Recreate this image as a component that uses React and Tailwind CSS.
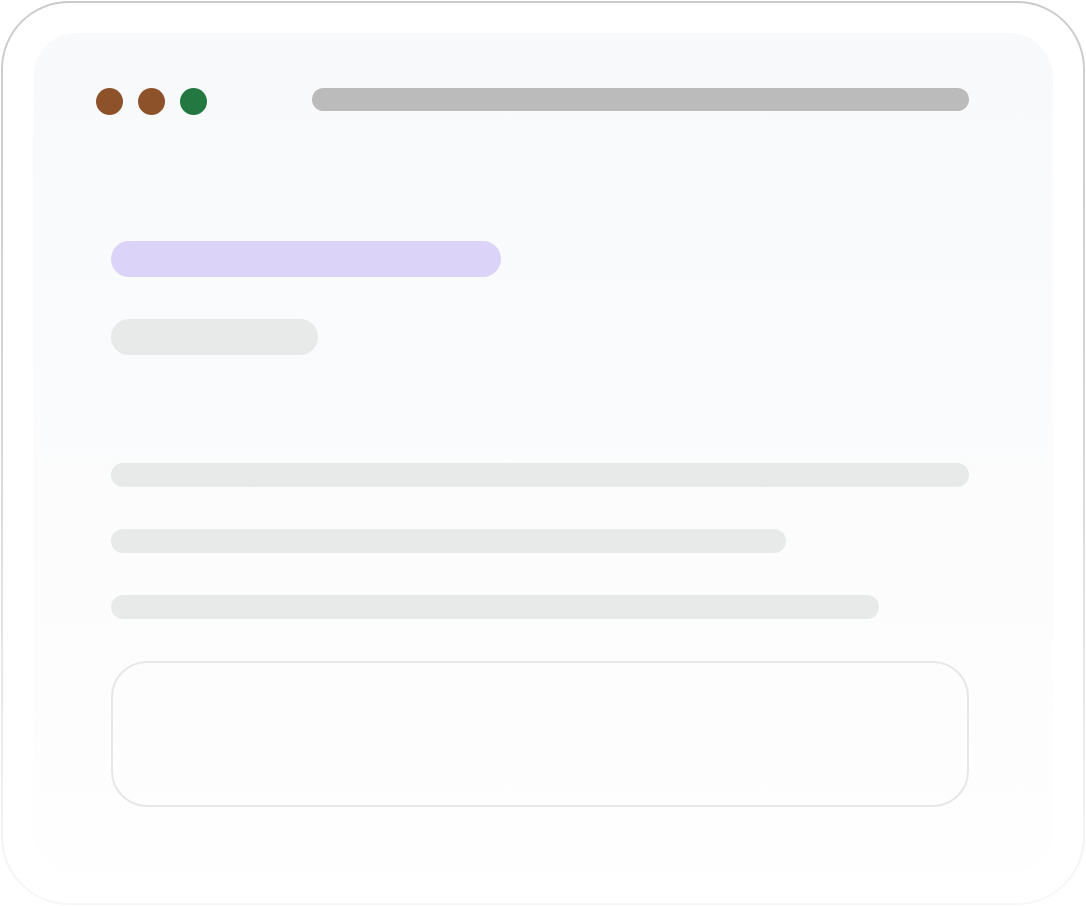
export default function App() {
  return (
    <div className="w-[1086px] h-[906px] bg-white p-px">
      {/* outer frame, border fades toward the bottom */}
      <div className="h-full rounded-[68px] p-[2px] bg-linear-to-b from-[#cbcbcb] via-[#d8d8d8] to-[#f7f7f7]">
        <div className="h-full rounded-[66px] bg-white pt-[30px] px-[30px]">
          <div className="h-[840px] rounded-[44px] bg-linear-to-b from-[#f8f9fb] to-[#fefefe] pt-[55px] pl-[63px] pr-[84px]">
            {/* title bar */}
            <div className="flex items-center">
              <div className="flex gap-[15px]">
                <span className="w-[27px] h-[27px] rounded-full bg-[#8e522a]" />
                <span className="w-[27px] h-[27px] rounded-full bg-[#8e522a]" />
                <span className="w-[27px] h-[27px] rounded-full bg-[#237841]" />
              </div>
              <div className="ml-[105px] flex-1 h-[23px] rounded-full bg-[#bbbbbb] -mt-[4px]" />
            </div>

            {/* content skeleton */}
            <div className="pl-[15px] mt-[126px]">
              <div className="w-[390px] h-[36px] rounded-full bg-[#dcd3f8]" />
              <div className="w-[207px] h-[36px] rounded-full bg-[#e8e9e9] mt-[42px]" />

              <div className="mt-[108px] flex flex-col gap-[42px]">
                <div className="w-full h-[24px] rounded-full bg-[#e8e9e9]" />
                <div className="w-[675px] h-[24px] rounded-full bg-[#e8e9e9]" />
                <div className="w-[768px] h-[24px] rounded-full bg-[#e8e9e9]" />
              </div>

              <div className="mt-[42px] h-[146px] rounded-[36px] border-2 border-[#e6e7e7]" />
            </div>
          </div>
        </div>
      </div>
    </div>
  );
}
